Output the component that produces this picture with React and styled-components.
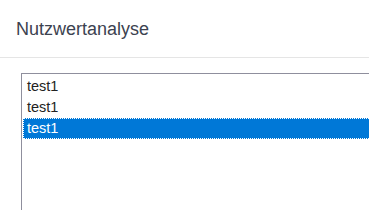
import React from 'react'
import styled, { createGlobalStyle } from 'styled-components'

const GlobalStyle = createGlobalStyle`
    html, body {
        margin : 0;
        padding : 0;
        background : #ffffff;
        overflow : hidden;
    }
`

const Page = styled.div`
    width : 369px;
    height : 210px;
    font-family : "Liberation Sans", Arial, sans-serif;
    overflow : hidden;
`

const Header = styled.div`
    height : 58px;
    border-bottom : 1px solid #e5e5e5;
    padding : 0 0 0 16px;
    display : flex;
    align-items : center;
    box-sizing : border-box;
`

const Title = styled.h4`
    margin : 0;
    font-size : 18px;
    font-weight : normal;
    color : #3c4250;
    padding-top : 1px;
`

const Body = styled.div`
    padding : 15px 0 0 21px;
`

const ListBox = styled.div`
    width : 400px;
    height : 200px;
    border : 1px solid #8f8f9d;
    border-right : none;
    padding : 2px 0 0 1px;
    box-sizing : border-box;
`

const Option = styled.div`
    height : 21px;
    line-height : 21px;
    font-size : 14.5px;
    padding-left : 4px;
    box-sizing : border-box;
    color : ${props => props.selected ? '#ffffff' : '#222222'};
    background : ${props => props.selected ? '#0078d7' : 'transparent'};
    outline : ${props => props.selected ? '1px dotted #ffffff' : 'none'};
    outline-offset : -1px;
`

const options = ['test1', 'test1', 'test1']

export default function App() {
    return (
        <Page>
            <GlobalStyle />
            <Header>
                <Title>Nutzwertanalyse</Title>
            </Header>
            <Body>
                <ListBox>
                    {options.map((o, i) => (
                        <Option key={i} selected={i === 2}>{o}</Option>
                    ))}
                </ListBox>
            </Body>
        </Page>
    )
}
